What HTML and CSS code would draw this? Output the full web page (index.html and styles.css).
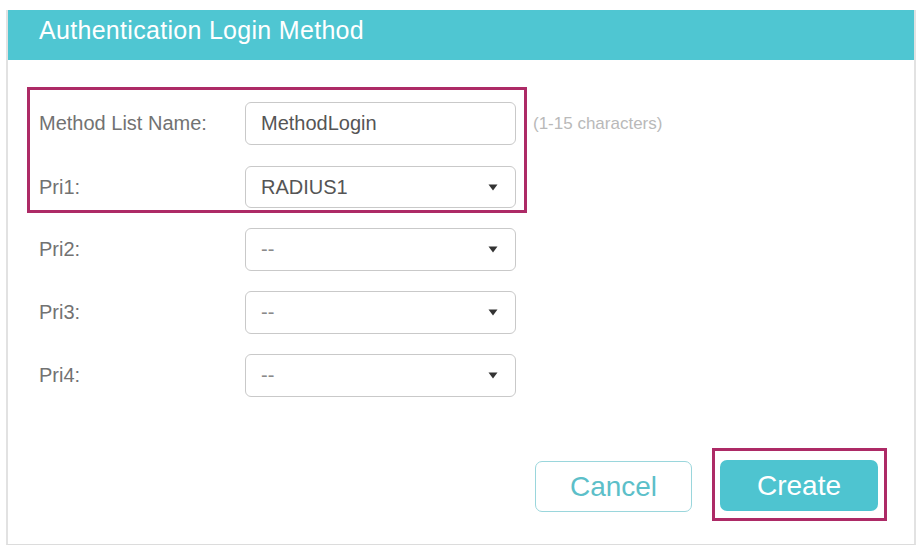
FILE: index.html
```html
<!DOCTYPE html>
<html lang="en">
<head>
<meta charset="utf-8">
<title>Authentication Login Method</title>
<link rel="stylesheet" href="styles.css">
</head>
<body>
<div class="dialog">
  <div class="dialog-header">Authentication Login Method</div>
  <div class="dialog-body">
    <div class="highlight">
      <div class="row">
        <div class="label">Method List Name:</div>
        <div class="field">MethodLogin</div>
        <div class="hint">(1-15 characters)</div>
      </div>
      <div class="row">
        <div class="label">Pri1:</div>
        <div class="field select"><span>RADIUS1</span><svg class="arrow" width="10" height="7" viewBox="0 0 10 7"><path d="M0.5 0.5 H9.5 L5 6.5 Z" fill="#333"/></svg></div>
      </div>
    </div>
    <div class="rows">
      <div class="row">
        <div class="label">Pri2:</div>
        <div class="field select"><span class="empty">--</span><svg class="arrow" width="10" height="7" viewBox="0 0 10 7"><path d="M0.5 0.5 H9.5 L5 6.5 Z" fill="#333"/></svg></div>
      </div>
      <div class="row">
        <div class="label">Pri3:</div>
        <div class="field select"><span class="empty">--</span><svg class="arrow" width="10" height="7" viewBox="0 0 10 7"><path d="M0.5 0.5 H9.5 L5 6.5 Z" fill="#333"/></svg></div>
      </div>
      <div class="row">
        <div class="label">Pri4:</div>
        <div class="field select"><span class="empty">--</span><svg class="arrow" width="10" height="7" viewBox="0 0 10 7"><path d="M0.5 0.5 H9.5 L5 6.5 Z" fill="#333"/></svg></div>
      </div>
    </div>
    <div class="actions">
      <button class="btn btn-cancel">Cancel</button>
      <div class="btn-highlight">
        <button class="btn btn-create">Create</button>
      </div>
    </div>
  </div>
</div>
</body>
</html>
```
FILE: styles.css
```css
* { box-sizing: border-box; }

html, body {
  margin: 0;
  padding: 0;
  background: #ffffff;
  font-family: "Liberation Sans", Arial, sans-serif;
}

body {
  padding: 10px 0 0 6px;
}

.dialog {
  width: 910px;
  border-left: 2px solid #e2e2e2;
  border-right: 2px solid #e2e2e2;
  border-bottom: 1px solid #dcdcdc;
  background: #fff;
}

.dialog-header {
  height: 50px;
  background: #4fc6d2;
  color: #ffffff;
  font-size: 25px;
  line-height: 40px;
  padding: 0 0 10px 31px;
  letter-spacing: 0.3px;
}

.dialog-body {
  padding: 27px 27px 23px 0;
}

.highlight {
  width: 500px;
  margin-left: 19px;
  border: 3px solid #ad2a66;
  padding: 12px 8px 2px 9px;
  display: flex;
  flex-direction: column;
  gap: 21px;
}

.rows {
  margin-top: 15px;
  padding-left: 31px;
  display: flex;
  flex-direction: column;
  gap: 20px;
}

.row {
  display: flex;
  align-items: center;
}

.label {
  flex: none;
  width: 206px;
  font-size: 20px;
  color: #727272;
}

.field {
  flex: none;
  width: 271px;
  height: 43px;
  border: 1px solid #c9c9c9;
  border-radius: 6px;
  padding: 0 17px 0 15px;
  font-size: 20px;
  color: #555;
  display: flex;
  align-items: center;
  background: #fff;
}

.highlight .row + .row .field { height: 42px; }

.select {
  justify-content: space-between;
}

.empty {
  color: #8a8a8a;
}

.arrow {
  display: block;
}

.hint {
  flex: none;
  margin-left: 17px;
  font-size: 17px;
  color: #b9b9b9;
  white-space: nowrap;
}

.actions {
  margin-top: 51px;
  display: flex;
  justify-content: flex-end;
  align-items: flex-end;
  gap: 20px;
}

.btn {
  font-family: "Liberation Sans", Arial, sans-serif;
  font-size: 28px;
  width: 158px;
  height: 51px;
  border-radius: 7px;
  padding: 0;
  cursor: pointer;
}

.btn-cancel {
  background: #ffffff;
  border: 1px solid #9ad6dc;
  color: #5cbfc9;
  margin-bottom: 9px;
  width: 157px;
}

.btn-highlight {
  border: 3px solid #ad2a66;
  padding: 9px 6px 7px 5px;
  display: flex;
}

.btn-create {
  background: #4ec4d0;
  border: none;
  color: #ffffff;
}
```
